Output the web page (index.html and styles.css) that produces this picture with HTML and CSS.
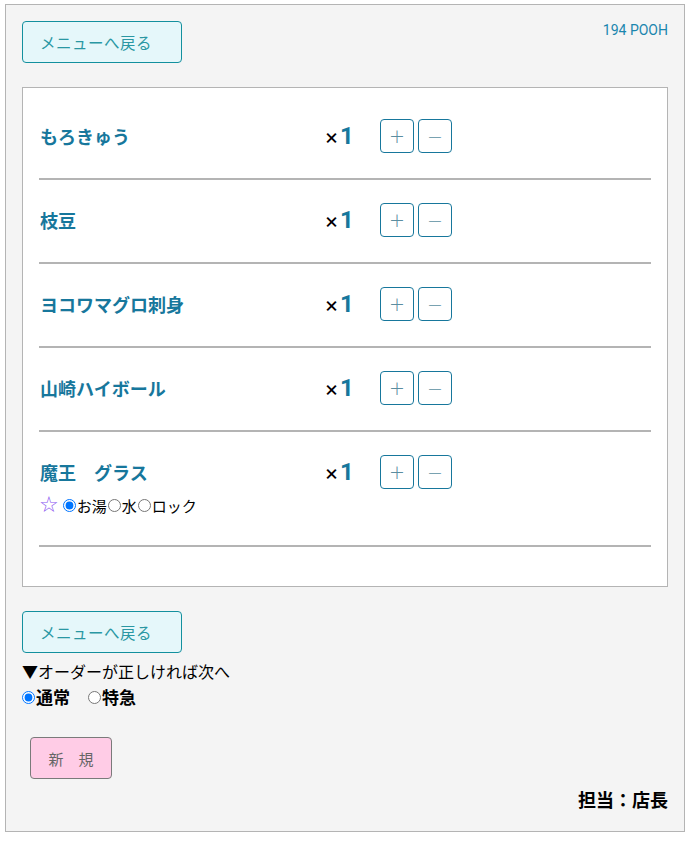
FILE: index.html
```html
<!DOCTYPE html>
<html lang="ja">
<head>
<meta charset="utf-8">
<link rel="stylesheet" href="styles.css">
</head>
<body>
<div class="page">
  <div class="header">
    <button class="menu-btn">メニューへ戻る</button>
    <div class="shop">194 POOH</div>
  </div>

  <div class="order-box">
    <div class="row">
      <div class="name">もろきゅう</div>
      <div class="qty"><span class="x">×</span><span class="n">1</span></div>
      <div class="ctrls"><button class="pm">+</button><button class="pm">−</button></div>
    </div>
    <div class="row">
      <div class="name">枝豆</div>
      <div class="qty"><span class="x">×</span><span class="n">1</span></div>
      <div class="ctrls"><button class="pm">+</button><button class="pm">−</button></div>
    </div>
    <div class="row">
      <div class="name">ヨコワマグロ刺身</div>
      <div class="qty"><span class="x">×</span><span class="n">1</span></div>
      <div class="ctrls"><button class="pm">+</button><button class="pm">−</button></div>
    </div>
    <div class="row">
      <div class="name">山崎ハイボール</div>
      <div class="qty"><span class="x">×</span><span class="n">1</span></div>
      <div class="ctrls"><button class="pm">+</button><button class="pm">−</button></div>
    </div>
    <div class="row">
      <div class="name">魔王　グラス</div>
      <div class="qty"><span class="x">×</span><span class="n">1</span></div>
      <div class="ctrls"><button class="pm">+</button><button class="pm">−</button></div>
      <div class="opts">
        <span class="star">☆</span>
        <label class="opt"><input type="radio" name="w" checked>お湯</label><label class="opt"><input type="radio" name="w">水</label><label class="opt"><input type="radio" name="w">ロック</label>
      </div>
    </div>
  </div>

  <button class="menu-btn second">メニューへ戻る</button>
  <div class="notice">▼オーダーが正しければ次へ</div>
  <div class="prio">
    <label class="pr"><input type="radio" name="p" checked>通常</label>
    <label class="pr"><input type="radio" name="p">特急</label>
  </div>
  <button class="new-btn">新　規</button>
  <div class="staff">担当：店長</div>
</div>
</body>
</html>
```

FILE: styles.css
```css
* { box-sizing: border-box; }
html, body { margin: 0; padding: 0; background: #ffffff; }
body {
  font-family: "Noto Sans CJK JP", "Noto Sans", sans-serif;
  color: #000;
}
.page {
  width: 680px;
  margin: 4px 0 0 5px;
  height: 828px;
  border: 1px solid #b4b4b4;
  background: #f4f4f4;
  padding: 16px 16px 0 16px;
}
.header {
  display: flex;
  justify-content: space-between;
  align-items: flex-start;
}
.menu-btn {
  display: block;
  width: 160px;
  height: 42px;
  border: 1px solid #13909e;
  border-radius: 4px;
  background: #e5f7fa;
  color: #2a97a3;
  font-family: "Noto Sans CJK JP", sans-serif;
  font-size: 15.5px;
  text-align: left;
  padding: 0 0 0 17px;
  letter-spacing: 0.5px;
}
.shop {
  font-family: Roboto, "Noto Sans", sans-serif;
  font-size: 14px;
  color: #1a86ae;
  margin-top: 1px;
}
.order-box {
  margin-top: 24px;
  background: #fff;
  border: 1px solid #b4b4b4;
  padding: 8px 16px 39px 16px;
}
.row {
  display: grid;
  grid-template-columns: 285px 56px auto;
  align-items: center;
  padding: 23px 0 25px 0;
  border-bottom: 2px solid #b4b4b4;
}
.name {
  padding-left: 1px;
  font-size: 18px;
  font-weight: bold;
  color: #17779c;
}
.qty {
  font-weight: bold;
  display: flex;
  align-items: baseline;
}
.qty .x { font-size: 15px; color: #000; margin-right: 1px; font-weight: 900; }
.qty .n { font-family: Roboto, sans-serif; font-size: 24px; color: #17779c; line-height: 1; }
.ctrls { display: flex; gap: 4px; }
.pm {
  width: 34px;
  height: 34px;
  border: 1px solid #17779c;
  border-radius: 4px;
  background: #fff;
  color: #5b8da0;
  font-family: "DejaVu Sans", sans-serif;
  font-size: 19px;
  font-weight: 300;
  padding: 0;
  line-height: 1;
}
.opts {
  grid-column: 1 / 4;
  display: flex;
  align-items: center;
  margin-top: 5px;
  margin-bottom: 4px;
  height: 22px;
  font-size: 15px;
}
.star {
  color: #8a55f0;
  font-size: 22px;
  font-family: "DejaVu Sans", sans-serif;
  margin-right: 3px;
  line-height: 1;
}
.opt { display: inline-flex; align-items: center; }
.opt input { margin: 0 1px 0 1px; width: 13px; height: 13px; }
.second { margin-top: 24px; }
.notice {
  margin-top: 7px;
  font-size: 16px;
  line-height: 22px;
}
.prio {
  display: flex;
  gap: 18px;
  font-size: 17px;
  font-weight: bold;
  line-height: 24px;
  margin-top: 3px;
}
.pr { display: inline-flex; align-items: center; }
.pr input { margin: 0 1px 0 0; width: 13px; height: 13px; }
.new-btn {
  display: block;
  margin: 28px 0 0 8px;
  width: 82px;
  height: 42px;
  border: 1px solid #7a7a7a;
  border-radius: 4px;
  background: #ffcce6;
  color: #666;
  font-family: "Noto Sans CJK JP", sans-serif;
  font-size: 15px;
  padding: 0;
}
.staff {
  text-align: right;
  font-size: 18px;
  font-weight: bold;
  margin-top: 7px;
}
```
